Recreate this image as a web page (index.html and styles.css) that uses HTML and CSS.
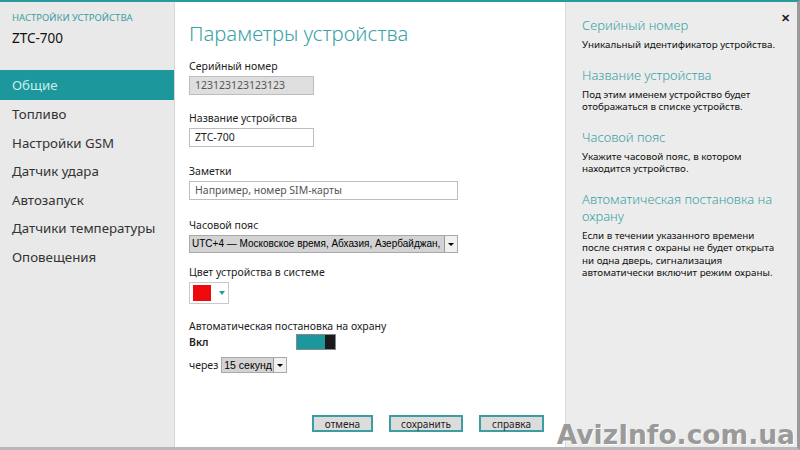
FILE: index.html
```html
<!DOCTYPE html>
<html lang="ru">
<head>
<meta charset="utf-8">
<link rel="stylesheet" href="styles.css">
</head>
<body>
<div class="frame">
  <aside class="nav">
    <div class="nav-head">
      <div class="nav-cap">НАСТРОЙКИ УСТРОЙСТВА</div>
      <div class="nav-dev">ZTC-700</div>
    </div>
    <ul class="nav-list">
      <li class="active">Общие</li>
      <li>Топливо</li>
      <li>Настройки GSM</li>
      <li>Датчик удара</li>
      <li>Автозапуск</li>
      <li>Датчики температуры</li>
      <li>Оповещения</li>
    </ul>
  </aside>
  <main class="main">
    <h1 class="title">Параметры устройства</h1>
    <div class="field f-serial">
      <div class="label">Серийный номер</div>
      <div class="input short disabled">123123123123123</div>
    </div>
    <div class="field f-name">
      <div class="label">Название устройства</div>
      <div class="input short">ZTC-700</div>
    </div>
    <div class="field f-notes">
      <div class="label">Заметки</div>
      <div class="input long placeholder">Например, номер SIM-карты</div>
    </div>
    <div class="field f-tz">
      <div class="label">Часовой пояс</div>
      <div class="select long"><span class="sel-text">UTC+4 — Московское время, Абхазия, Азербайджан,</span><span class="sel-btn"><i></i></span></div>
    </div>
    <div class="field f-color">
      <div class="label">Цвет устройства в системе</div>
      <div class="color"><span class="swatch"></span><span class="caret"></span></div>
    </div>
    <div class="field f-auto">
      <div class="label">Автоматическая постановка на охрану</div>
      <div class="row-on"><span class="on">Вкл</span><span class="toggle"><span class="knob"></span></span></div>
      <div class="row-delay"><span class="through">через</span><span class="select small"><span class="sel-text">15 секунд</span><span class="sel-btn"><i></i></span></span></div>
    </div>
    <div class="buttons">
      <button class="btn">отмена</button>
      <button class="btn">сохранить</button>
      <button class="btn">справка</button>
    </div>
  </main>
  <aside class="help">
    <div class="close">✕</div>
    <h2>Серийный номер</h2>
    <p>Уникальный идентификатор устройства.</p>
    <h2>Название устройства</h2>
    <p>Под этим именем устройство будет отображаться в списке устройств.</p>
    <h2>Часовой пояс</h2>
    <p>Укажите часовой пояс, в котором находится устройство.</p>
    <h2>Автоматическая постановка на охрану</h2>
    <p>Если в течении указанного времени после снятия с охраны не будет открыта ни одна дверь, сигнализация автоматически включит режим охраны.</p>
  </aside>
  <div class="watermark">AvizInfo.com.ua</div>
</div>
</body>
</html>
```
FILE: styles.css
```css
* { box-sizing: border-box; }
html, body { margin: 0; padding: 0; }
body {
  width: 800px; height: 450px; overflow: hidden;
  font-family: "Noto Sans", "Open Sans", sans-serif;
  background: #ffffff; color: #222;
}
.frame {
  position: relative;
  width: 800px; height: 450px;
  display: flex;
  border-top: 2px solid #2a9a9c;
  border-bottom: 3px solid #b8b8b8;
  border-right: 3px solid #9a9a9a;
}
.nav {
  width: 175px; flex: none;
  background: #e9e9e9;
  border-right: 1px solid #d6d6d6;
}
.nav-head { padding: 9px 0 0 12px; height: 68px; }
.nav-cap { font-size: 9.5px; color: #3a9ea2; }
.nav-dev { font-size: 13.5px; color: #111; margin-top: 5px; }
.nav-list { list-style: none; margin: 0; padding: 0; }
.nav-list li {
  height: 28.5px; line-height: 28.5px;
  padding-left: 12px; font-size: 13.3px; color: #333;
}
.nav-list li.active { background: #1c979b; color: #c6eeee; height: 30px; line-height: 30px; }
.main {
  width: 390px; flex: none;
  padding: 17px 0 0 14px;
  background: #fff;
  display: flex; flex-direction: column;
}
.title {
  margin: 0; font-weight: 300; font-size: 20.3px; color: #3aa3a6;
  line-height: 28px; margin-bottom: 12px;
}
.field { margin-bottom: 14px; }
.f-serial { margin-bottom: 16px; }
.f-name { margin-bottom: 17px; }
.f-notes { margin-bottom: 18px; }
.f-tz { margin-bottom: 12px; }
.f-color { margin-bottom: 15px; }
.label { font-size: 10.5px; color: #222; line-height: 14px; margin-bottom: 3px; }
.input {
  height: 19px; border: 1px solid #bdbdbd; background: #fff;
  font-size: 10.5px; line-height: 17px; padding-left: 5px; color: #222;
}
.input.short { width: 125px; }
.input.long { width: 269px; }
.input.disabled { background: #dedede; color: #555; }
.input.placeholder { color: #555; }
.select {
  display: flex; height: 18px; border: 1px solid #a9a9a9; background: #d3d3d3;
  font-family: "Liberation Sans", Arial, sans-serif; font-size: 10px; color: #000;
}
.select.long { width: 269px; }
.sel-text { flex: 1; line-height: 16px; padding-left: 2px; white-space: nowrap; overflow: hidden; }
.sel-btn {
  width: 13px; flex: none; background: #f0f0f0; border-left: 1px solid #999;
  display: flex; align-items: center; justify-content: center;
}
.sel-btn i {
  width: 0; height: 0; border-left: 3px solid transparent; border-right: 3px solid transparent;
  border-top: 3px solid #000;
}
.color {
  display: flex; align-items: center; width: 40px; height: 22px;
  border: 1px solid #c9c9c9; background: #fff;
}
.swatch { width: 18px; height: 16px; background: #ee0a0a; margin-left: 3px; }
.caret {
  margin-left: 8px; width: 0; height: 0; border-left: 3px solid transparent; border-right: 3px solid transparent;
  border-top: 4px solid #2a9a9c;
}
.row-on { display: flex; align-items: center; height: 17px; margin-top: -3px; }
.on { font-size: 10.5px; font-weight: 600; width: 107px; }
.toggle {
  display: flex; width: 40px; height: 16px; background: #1c979b;
  border: 1px solid #888;
}
.toggle .knob { margin-left: auto; width: 10px; height: 100%; background: #1a1a1a; }
.row-delay { display: flex; align-items: center; margin-top: 7px; }
.through { font-size: 10.5px; margin-right: 3px; }
.select.small { width: 66px; height: 16px; font-size: 10.5px; }
.select.small .sel-text { line-height: 14px; padding-left: 2px; }
.buttons { margin-top: auto; display: flex; gap: 16px; padding-left: 123px; margin-bottom: 15px; }
.btn {
  height: 17px; border: 2px solid #3a9ea2; background: #dcdcdc;
  font-family: "Noto Sans", sans-serif; font-size: 10px; color: #222;
  padding: 0; line-height: 12px;
}
.btn:nth-child(1) { width: 61px; }
.btn:nth-child(2) { width: 74px; }
.btn:nth-child(3) { width: 65px; }
.help {
  position: relative;
  flex: 1; background: #ececec;
  padding: 15px 14px 0 16px;
  border-left: 1px solid #dadada;
}
.help h2 {
  margin: 0; font-weight: 300; font-size: 13px; color: #39a2a6; line-height: 17px;
}
.help p { margin: 5px 0 15px; font-size: 9.8px; line-height: 12.5px; color: #111; }
.close {
  position: absolute; right: 7px; top: 8px;
  font-size: 11px; font-weight: 700; color: #222;
}
.watermark {
  position: absolute; right: 2px; bottom: -3px;
  font-family: "DejaVu Sans", sans-serif; font-weight: 700; font-size: 26.5px;
  color: #9a9a9a;
  text-shadow: 1px 1px 0 #ffffff;
}
```
